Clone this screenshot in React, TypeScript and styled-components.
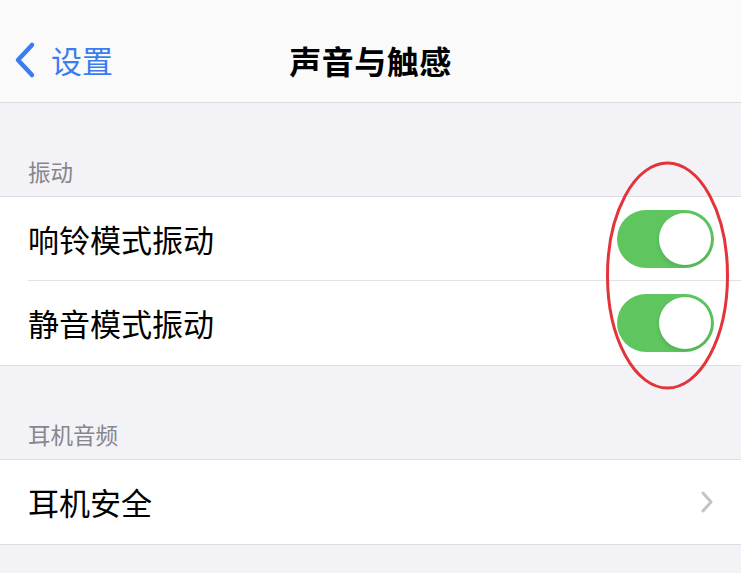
import React from 'react';
import styled, { createGlobalStyle } from 'styled-components';

const GlobalStyle = createGlobalStyle`
  html, body {
    margin: 0;
    padding: 0;
    background: #f2f2f7;
  }
  body {
    font-family: "Noto Sans CJK SC", "Noto Sans", sans-serif;
    -webkit-font-smoothing: antialiased;
  }
`;

const Page = styled.div`
  position: relative;
  width: 741px;
  height: 573px;
  overflow: hidden;
  background: #f2f2f7;
`;

const NavBar = styled.div`
  position: relative;
  height: 102px;
  background: #fafafb;
  border-bottom: 1px solid #dcdce0;
  display: flex;
  align-items: center;
  justify-content: center;
`;

const BackButton = styled.div`
  position: absolute;
  left: 13px;
  top: 41px;
  display: flex;
  align-items: center;
  gap: 14px;
  color: #3a7df1;
  font-size: 31px;
  line-height: 38px;
`;

const Title = styled.div`
  font-size: 32px;
  font-weight: 700;
  color: #000;
  line-height: 40px;
  margin-top: 18px;
  letter-spacing: 0.5px;
`;

const SectionHeader = styled.div`
  padding: 0 28px 10px;
  height: 93px;
  box-sizing: border-box;
  display: flex;
  align-items: flex-end;
  font-size: 22.5px;
  line-height: 30px;
  color: #86868b;
`;

const Group = styled.div`
  background: #fff;
  border-top: 1px solid #dedee2;
  border-bottom: 1px solid #dedee2;
`;

const Row = styled.div<{ $divider?: boolean }>`
  position: relative;
  height: 84px;
  display: flex;
  align-items: center;
  padding: 0 27px 0 28px;
  font-size: 31px;
  color: #000;
  &::after {
    content: '';
    display: ${(p) => (p.$divider ? 'block' : 'none')};
    position: absolute;
    left: 28px;
    right: 0;
    bottom: 0;
    height: 1px;
    background: #e2e2e6;
  }
`;

const Label = styled.span`
  flex: 1;
  line-height: 40px;
`;

const Track = styled.div<{ $on: boolean }>`
  width: 97px;
  height: 58px;
  border-radius: 29px;
  background: ${(p) => (p.$on ? '#5ec55f' : '#e9e9ea')};
  display: flex;
  align-items: center;
  justify-content: ${(p) => (p.$on ? 'flex-end' : 'flex-start')};
  padding: 0 3px;
  box-sizing: border-box;
  margin-right: 0;
`;

const Knob = styled.div`
  width: 52px;
  height: 52px;
  border-radius: 50%;
  background: #fff;
  box-shadow: 0 2px 4px rgba(0, 0, 0, 0.12);
`;

const Annotation = styled.svg`
  position: absolute;
  left: 0;
  top: 0;
  pointer-events: none;
`;

const Toggle: React.FC<{ on: boolean }> = ({ on }) => (
  <Track $on={on}>
    <Knob />
  </Track>
);

export default function App() {
  return (
    <Page>
      <GlobalStyle />
      <NavBar>
        <BackButton>
          <svg width="24" height="38" viewBox="0 0 24 38">
            <path d="M19 4 L5 19 L19 34" fill="none" stroke="#3a7df1" strokeWidth="4.5" strokeLinecap="round" strokeLinejoin="round" />
          </svg>
          <span>设置</span>
        </BackButton>
        <Title>声音与触感</Title>
      </NavBar>

      <SectionHeader>振动</SectionHeader>
      <Group>
        <Row $divider>
          <Label>响铃模式振动</Label>
          <Toggle on />
        </Row>
        <Row>
          <Label>静音模式振动</Label>
          <Toggle on />
        </Row>
      </Group>

      <SectionHeader>耳机音频</SectionHeader>
      <Group>
        <Row>
          <Label>耳机安全</Label>
          <svg width="14" height="22" viewBox="0 0 14 22">
            <path d="M3 2 L11 11 L3 20" fill="none" stroke="#c4c4c8" strokeWidth="3" strokeLinecap="round" strokeLinejoin="round" />
          </svg>
        </Row>
      </Group>

      <Annotation width="741" height="573">
        <ellipse cx="667.5" cy="275.5" rx="60" ry="112.5" fill="none" stroke="#e3343a" strokeWidth="3" />
      </Annotation>
    </Page>
  );
}
